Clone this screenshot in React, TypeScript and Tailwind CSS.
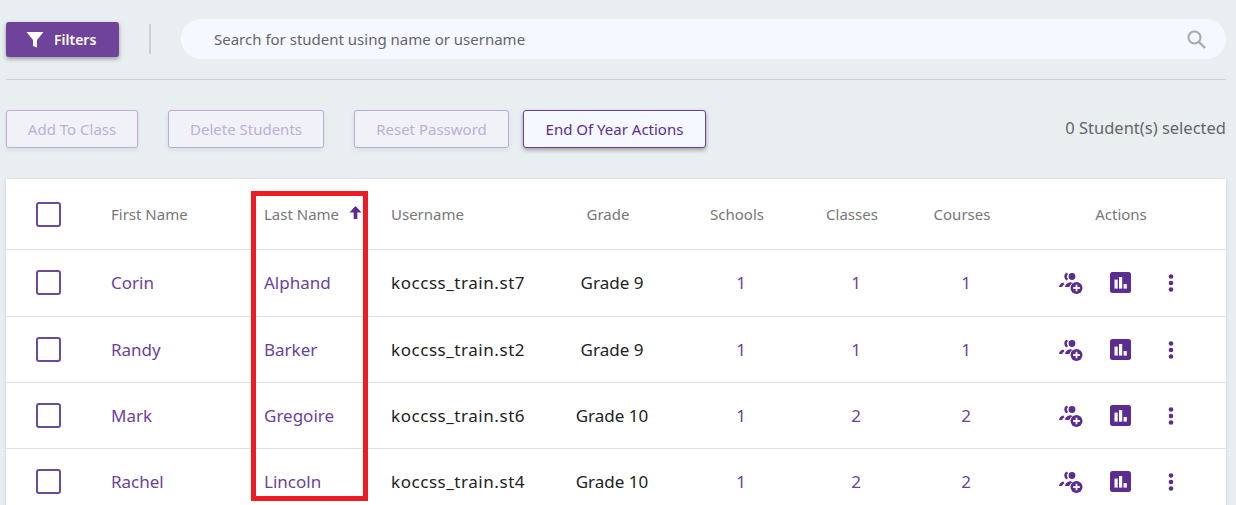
const students = [
  { first: "Corin", last: "Alphand", username: "koccss_train.st7", grade: "Grade 9", schools: 1, classes: 1, courses: 1 },
  { first: "Randy", last: "Barker", username: "koccss_train.st2", grade: "Grade 9", schools: 1, classes: 1, courses: 1 },
  { first: "Mark", last: "Gregoire", username: "koccss_train.st6", grade: "Grade 10", schools: 1, classes: 2, courses: 2 },
  { first: "Rachel", last: "Lincoln", username: "koccss_train.st4", grade: "Grade 10", schools: 1, classes: 2, courses: 2 },
];

const rowGrid = "grid grid-cols-[105px_153px_127px_159px_120px_138px_92px_128px_198px] items-center";

function Checkbox() {
  return <div className="ml-[30px] h-[25px] w-[25px] rounded-[3px] border-2 border-[#6b4a9e] bg-white" />;
}

function AddUserIcon() {
  return (
    <svg width="26" height="26" viewBox="0 0 26 26" fill="#5b2d91">
      <circle cx="14" cy="6.500" r="3.400" />
      <path d="M8.800 2.500a4.400 4.400 0 0 0 0 8l1.200-1.800a2.600 2.600 0 0 1 0-4.400z" />
      <path d="M1 17c.4-2.400 2-4 4.400-4.400l1 1.800c-1.200.4-2 1.300-2.200 2.600z" />
      <path d="M7 17c.4-2.800 2.400-4.500 5-4.700 1 0 2 .2 2.800.6-1.700.8-3 2.200-3.400 4.100z" />
      <circle cx="18.500" cy="18" r="6" />
      <path d="M17.600 14.700h1.800v2.400h2.400v1.800h-2.400v2.400h-1.800v-2.400h-2.400v-1.800h2.400z" fill="#fff" />
    </svg>
  );
}

function ChartIcon() {
  return (
    <svg width="21" height="21" viewBox="0 0 21 21">
      <rect width="21" height="21" rx="2.500" fill="#5b2d91" />
      <rect x="4.500" y="7.600" width="3.200" height="9" fill="#fff" />
      <rect x="9" y="5" width="3.200" height="11.600" fill="#fff" />
      <rect x="13.600" y="12" width="3.200" height="4.600" fill="#fff" />
    </svg>
  );
}

function DotsIcon() {
  return (
    <svg width="8" height="20" viewBox="0 0 8 20" fill="#5b2d91">
      <circle cx="4" cy="3.500" r="2.300" />
      <circle cx="4" cy="10" r="2.300" />
      <circle cx="4" cy="16.500" r="2.300" />
    </svg>
  );
}

function ActionButton({ label, enabled }: { label: string; enabled?: boolean }) {
  return (
    <button
      className={
        enabled
          ? "h-[38px] rounded-[3px] border border-[#6b3fa0] bg-[#f5f8fe] text-[15px] text-[#5b2d91] shadow-[0_2px_4px_rgba(0,0,0,0.35)]"
          : "h-[38px] rounded-[3px] border border-[#bfaad8] bg-[#f0f2f8] text-[15px] text-[#bdb0d6] shadow-[0_2px_5px_rgba(0,0,0,0.08)]"
      }
    >
      {label}
    </button>
  );
}

export default function App() {
  return (
    <div className="relative h-[505px] w-[1236px] overflow-hidden bg-[#e9eef1] pl-[6px] pr-[10px] font-['Noto_Sans',sans-serif]">
      <div className="flex h-[80px] items-start border-b border-[#cdd0d2] pt-[19px]">
        <button className="mt-[3px] flex h-[35px] w-[113px] items-center rounded-[3px] bg-[#6f4399] pl-[20px] text-[14px] font-semibold text-white shadow-[0_2px_4px_rgba(0,0,0,0.35)]">
          <svg width="18" height="16" viewBox="0 0 18 16" fill="#fff" className="mr-[10px]">
            <path d="M0.500 0h17l-6.500 8v7.500l-4-1.500v-6z" />
          </svg>
          Filters
        </button>
        <div className="ml-[30px] mt-[5px] h-[30px] w-[2px] bg-[#cdd0d2]" />
        <div className="ml-[30px] flex h-[40px] flex-1 items-center justify-between rounded-full bg-[#f5f8fe] pl-[33px] pr-[20px] text-[15px] text-[#666]">
          <span>Search for student using name or username</span>
          <svg width="19" height="19" viewBox="0 0 19 19" fill="none" stroke="#a9a9a9" strokeWidth="2">
            <circle cx="7.500" cy="7.500" r="6" />
            <path d="M12 12l6 6" strokeWidth="2.400" />
          </svg>
        </div>
      </div>

      <div className="mt-[30px] flex items-center">
        <div className="flex">
          <div className="grid w-[132px]"><ActionButton label="Add To Class" /></div>
          <div className="ml-[30px] grid w-[156px]"><ActionButton label="Delete Students" /></div>
          <div className="ml-[30px] grid w-[155px]"><ActionButton label="Reset Password" /></div>
          <div className="ml-[14px] grid w-[183px]"><ActionButton label="End Of Year Actions" enabled /></div>
        </div>
        <span className="ml-auto -translate-y-px text-[16.500px] text-[#666]">0 Student(s) selected</span>
      </div>

      <div className="mt-[31px] bg-white shadow-[0_1px_4px_rgba(0,0,0,0.12)]">
        <div className={`${rowGrid} h-[71px] border-b border-[#dfe0e2] text-[15px] text-[#777]`}>
          <Checkbox />
          <span>First Name</span>
          <span className="relative">
            Last Name
            <svg width="13" height="13" viewBox="0 0 13 13" fill="#5b2d91" className="absolute left-[85px] top-[3px]">
              <path d="M6.500 0l6 6.500H8.300V13H4.700V6.500H0.500z" />
            </svg>
          </span>
          <span>Username</span>
          <span className="pr-1 text-center">Grade</span>
          <span className="pr-1 text-center">Schools</span>
          <span className="pr-1 text-center">Classes</span>
          <span className="pr-1 text-center">Courses</span>
          <span className="pr-3 text-center">Actions</span>
        </div>
        {students.map((s, i) => (
          <div
            key={s.username}
            className={`${rowGrid} ${i === 0 ? "h-[67px] pb-px" : "h-[66px]"} border-b border-[#dfe0e2] text-[17px]`}
          >
            <Checkbox />
            <span className="text-[#6b3fa0]">{s.first}</span>
            <span className="text-[#6b3fa0]">{s.last}</span>
            <span className="tracking-[0.55px] text-[#222]">{s.username}</span>
            <span className="pl-1 text-center text-[#222]">{s.grade}</span>
            <span className="pl-1 text-center text-[#6b3fa0]">{s.schools}</span>
            <span className="pl-1 text-center text-[#6b3fa0]">{s.classes}</span>
            <span className="pl-1 text-center text-[#6b3fa0]">{s.courses}</span>
            <div className="flex items-center pl-[30px]">
              <AddUserIcon />
              <div className="ml-[26px]"><ChartIcon /></div>
              <div className="ml-[36px]"><DotsIcon /></div>
            </div>
          </div>
        ))}
      </div>

      <div className="absolute left-[251px] top-[191px] h-[310px] w-[117px] border-[5px] border-[#ed1c24]" />
    </div>
  );
}
